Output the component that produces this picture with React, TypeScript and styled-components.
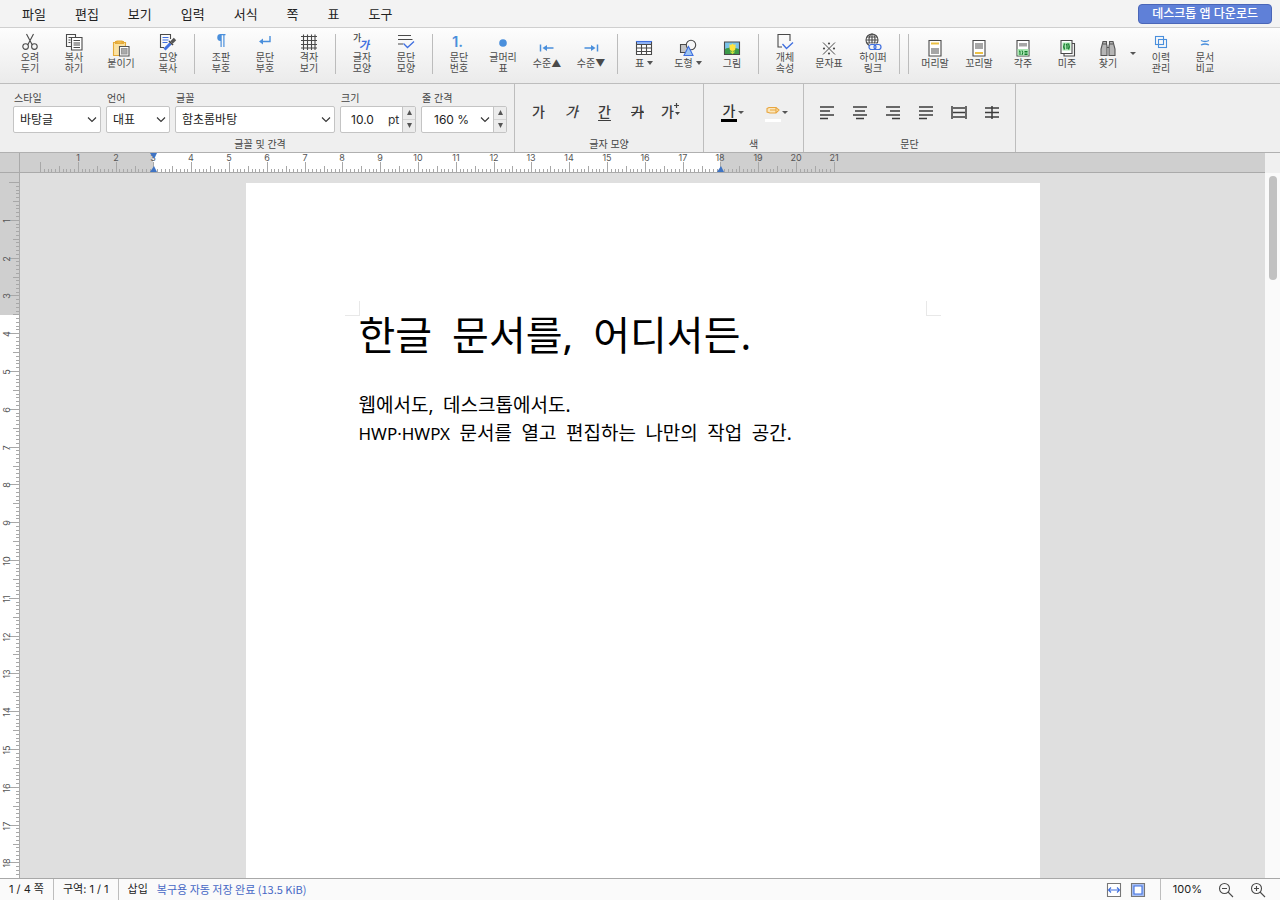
import React, { useLayoutEffect, useRef, useState } from "react";
import styled, { createGlobalStyle, css } from "styled-components";

const ui = `"Inter", "Noto Sans CJK KR", sans-serif`;

const Global = createGlobalStyle`
  * { box-sizing: border-box; }
  html, body { margin: 0; height: 100%; }
  body { font-family: ${ui}; color: #333; background: #dfdfdf; }
  button, select, input { font-family: inherit; color: inherit; margin: 0; }
  button { border: 0; background: none; padding: 0; cursor: pointer; }
  svg { display: block; }
`;

const Shell = styled.div`
  display: flex;
  flex-direction: column;
  height: 100vh;
  overflow: hidden;
`;

/* ---------- menu bar ---------- */

const MenuBar = styled.header`
  display: flex;
  align-items: center;
  justify-content: space-between;
  flex: none;
  height: 28px;
  padding: 0 8px;
  background: #f3f3f3;
  border-bottom: 1px solid #cfcfcf;
`;

const Menus = styled.nav`
  display: flex;
`;

const MenuButton = styled.button`
  padding: 0 14px;
  margin-right: 1px;
  font-size: 13px;
  line-height: 20px;
  color: #222;
`;

const DownloadLink = styled.a`
  height: 20px;
  padding: 0 13px;
  border: 1px solid #4a66b8;
  border-radius: 4px;
  background: #5f80d8;
  color: #fff;
  font-size: 12px;
  font-weight: 500;
  line-height: 18px;
  text-decoration: none;
`;

/* ---------- icon toolbar ---------- */

const Toolbar = styled.div`
  display: flex;
  align-items: center;
  flex: none;
  height: 56px;
  padding: 0 8px 4px;
  background: linear-gradient(#fdfdfd, #ebebeb);
  border-bottom: 1px solid #bdbdbd;
`;

const ToolButton = styled.button<{ $w?: number }>`
  display: flex;
  flex-direction: column;
  align-items: center;
  gap: 1px;
  flex: none;
  width: ${(p) => p.$w ?? 44}px;
`;

const ToolLabel = styled.span`
  display: flex;
  align-items: center;
  gap: 3px;
  font-size: 10px;
  line-height: 11px;
  white-space: pre-line;
  text-align: center;
  color: #4a4a4a;
`;

const Caret = styled.span`
  border: 3px solid transparent;
  border-top: 4px solid #555;
  border-bottom: 0;
`;

const SmallCaret = styled.span`
  border: 3px solid transparent;
  border-top-color: #555;
  border-bottom: 0;
`;

const CaretButton = styled.button`
  display: flex;
  justify-content: center;
  flex: none;
  width: 12px;
  padding: 8px 0;
`;

const Separator = styled.span`
  flex: none;
  width: 1px;
  height: 40px;
  margin: 0 4px;
  background: #bcbcbc;
`;

/* ---------- format bar ---------- */

const FormatBar = styled.div`
  display: flex;
  flex: none;
  height: 69px;
  background: #efefef;
  border-bottom: 1px solid #b0b0b0;
`;

const Group = styled.section<{ $pad: string }>`
  display: flex;
  flex-direction: column;
  flex: none;
  padding: ${(p) => p.$pad};
  border-right: 1px solid #bdbdbd;
`;

const GroupRow = styled.div<{ $gap?: number; $pad?: string }>`
  display: flex;
  align-items: center;
  flex: 1;
  gap: ${(p) => p.$gap ?? 0}px;
  padding: ${(p) => p.$pad ?? "0"};
`;

const GroupTitle = styled.h2`
  margin: 0;
  font-size: 10px;
  font-weight: 400;
  line-height: 16px;
  text-align: center;
  color: #444;
`;

const Field = styled.div<{ $w: number }>`
  display: flex;
  flex-direction: column;
  width: ${(p) => p.$w}px;
`;

const FieldLabel = styled.label`
  padding-left: 1px;
  font-size: 10px;
  line-height: 16px;
  color: #444;
`;

const Control = styled.div`
  display: flex;
  align-items: stretch;
  position: relative;
  height: 27px;
  border: 1px solid #c4c4c4;
  border-radius: 2px;
  background: #fff;
  overflow: hidden;
`;

const Select = styled.select<{ $pad?: number }>`
  appearance: none;
  flex: 1;
  min-width: 0;
  border: 0;
  padding: 0 20px 0 ${(p) => p.$pad ?? 6}px;
  background: transparent;
  font-size: 12px;
  color: #222;
`;

const Chevron = styled.svg<{ $right?: number }>`
  position: absolute;
  top: 9px;
  right: ${(p) => p.$right ?? 3}px;
  pointer-events: none;
`;

const SizeInput = styled.input`
  width: 44px;
  border: 0;
  padding: 0 0 0 10px;
  background: transparent;
  font-size: 12px;
  color: #222;
`;

const Unit = styled.span`
  flex: 1;
  padding-left: 3px;
  font-size: 12px;
  line-height: 25px;
`;

const Spinner = styled.div`
  display: flex;
  flex-direction: column;
  width: 13px;
  border-left: 1px solid #c4c4c4;
  background: #ececec;
`;

const SpinButton = styled.button`
  display: flex;
  align-items: center;
  justify-content: center;
  flex: 1;
  & + & {
    border-top: 1px solid #d4d4d4;
  }
`;

const FormatButton = styled.button<{ $italic?: boolean; $line?: "underline" | "line-through" }>`
  display: flex;
  align-items: center;
  justify-content: center;
  width: 33px;
  height: 26px;
  font-size: 14px;
  font-weight: 500;
  line-height: 20px;
  color: #3c3c3c;
  ${(p) => p.$italic && css`font-style: italic;`}
  ${(p) =>
    p.$line &&
    css`
      text-decoration: ${p.$line} 1px;
      text-underline-offset: 3px;
    `}
`;

const ColorButton = styled.button`
  display: flex;
  align-items: center;
  gap: 1px;
  width: 38px;
  height: 26px;
`;

const Swatch = styled.span<{ $color: string }>`
  display: flex;
  justify-content: center;
  align-items: center;
  width: 16px;
  height: 19px;
  border-bottom: 3px solid ${(p) => p.$color};
  font-size: 14px;
  font-weight: 500;
  line-height: 16px;
`;

/* ---------- work area ---------- */

const WorkArea = styled.main`
  display: grid;
  grid-template-columns: 20px 1fr 15px;
  grid-template-rows: 20px 1fr;
  flex: 1;
  min-height: 0;
`;

const Corner = styled.div`
  background: #cfcfcf;
  border-right: 1px solid #aaa;
  border-bottom: 1px solid #aaa;
`;

const TopRuler = styled.div`
  overflow: hidden;
  background: #cfcfcf;
  border-bottom: 1px solid #aaa;
`;

const SideRuler = styled.div`
  min-height: 0;
  overflow: hidden;
  background: #fff;
  border-right: 1px solid #aaa;
`;

const RulerEnd = styled.div`
  background: #f0f0f0;
`;

const Viewport = styled.div`
  display: flex;
  justify-content: center;
  min-height: 0;
  padding-top: 10px;
  overflow: hidden;
  background: #dfdfdf;
`;

const Page = styled.article`
  flex: none;
  width: 794px;
  height: 1123px;
  padding: 118px 99px 0;
  background: #fff;
`;

const CropMarks = styled.div`
  display: flex;
  justify-content: space-between;
`;

const CropMark = styled.span<{ $side: "left" | "right" }>`
  width: 15px;
  height: 15px;
  border-bottom: 1px solid #e8e8e8;
  border-${(p) => (p.$side === "left" ? "right" : "left")}: 1px solid #e8e8e8;
`;

const Body = styled.div`
  padding: 0 14px;
  font-family: "Noto Sans Mono CJK KR", "Noto Sans CJK KR", sans-serif;
  color: #000;
`;

const Title = styled.h1`
  margin: 0 0 40px;
  font-size: 40px;
  font-weight: 400;
  line-height: 34px;
`;

const Line = styled.p`
  margin: 0;
  font-size: 19px;
  line-height: 28px;
`;

const Latin = styled.span`
  font-family: "Noto Sans", sans-serif;
  line-height: 0;
`;

const LatinWord = styled(Latin)`
  font-size: 17px;
`;

const ScrollTrack = styled.div`
  padding: 3px;
  background: #fafafa;
`;

const ScrollThumb = styled.div`
  width: 8px;
  height: 104px;
  margin-left: 1px;
  border-radius: 4px;
  background: #c1c1c1;
`;

/* ---------- status bar ---------- */

const StatusBar = styled.footer`
  display: flex;
  align-items: stretch;
  flex: none;
  height: 22px;
  border-top: 1px solid #a8a8a8;
  background: #fafafa;
  font-size: 11px;
  line-height: 21px;
  color: #222;
`;

const StatusCell = styled.span<{ $divided?: boolean }>`
  padding: 0 9px;
  border-right: ${(p) => (p.$divided ? "1px solid #bdbdbd" : "0")};
`;

const SaveState = styled.span`
  flex: 1;
  font-family: "Noto Sans CJK KR", sans-serif;
  color: #4668c5;
`;

const ViewButtons = styled.div`
  display: flex;
  align-items: center;
  gap: 8px;
  padding-right: 14px;
  border-right: 1px solid #bdbdbd;
`;

const ZoomControls = styled.div`
  display: flex;
  align-items: center;
  gap: 16px;
  padding: 0 14px 0 12px;
`;

/* ---------- icons ---------- */

const Icon = ({ children, w = 18, h = 18 }: { children: React.ReactNode; w?: number; h?: number }) => (
  <svg width={w} height={h} viewBox={`0 0 ${w} ${h}`} fill="none" stroke="#4a4a4a" strokeWidth="1.1" aria-hidden="true">
    {children}
  </svg>
);

const blue = "#4a8fdc";
const royal = "#3f6fe0";

const icons: Record<string, React.ReactNode> = {
  cut: <Icon><path d="M5.500 1 11.300 12M12.500 1 6.700 12" /><circle cx="4.600" cy="13.600" r="2.800" /><circle cx="13.400" cy="13.600" r="2.800" /></Icon>,
  copy: <Icon><path d="M6 13.500H1.500v-12h9V4" /><path d="M3.500 4.500H6M3.500 7H5.500M3.500 9.500H5.500" /><path d="M6.500 4.500h10.500v12.500H6.500z" fill="#fff" /><path d="M8.500 7.500H15M8.500 10H15M8.500 12H15M8.500 14.500H15" /></Icon>,
  paste: <Icon><path d="M1.500 3.500h12v13h-12z" fill="#fbe2a2" stroke="#e5ab3a" /><path d="M3 3.500h9" stroke="#e5ab3a" strokeWidth="3" /><path d="M5 4.500V2h5v2.500z" fill="#f0bb4c" stroke="#e5ab3a" /><path d="M7.500 7.500h9.500v9.500H7.500z" fill="#fff" stroke="#555" /><path d="M9.500 9.500h5.500v5.500H9.500z" fill="#aaa" stroke="#999" /></Icon>,
  painter: <Icon><path d="M11.500 6V1.500H1.500v13H5" /><path d="M3.500 4.500h6M3.500 7h6M3.500 9.500h5" stroke={royal} /><path d="M5.500 16.500 11.500 10.500" stroke={royal} strokeWidth="3" /><path d="M10 8l4 4" stroke="#444" strokeWidth="1.600" /><path d="M12.500 9.500 16 6" stroke="#555" strokeWidth="3.400" /></Icon>,
  pilcrow: <Icon><path d="M9 1H13.500V2.200H12.500V14H11.300V2.200H9.700V14H8.500V8A3.500 3.500 0 0 1 9 1z" fill={blue} stroke="none" /></Icon>,
  enter: <Icon><path d="M14 3v5.500H5" stroke={blue} strokeWidth="1.400" /><path d="M3 8.500 7 5.500v6z" fill={blue} stroke="none" /></Icon>,
  grid: <Icon><path d="M3.500 1.500v15.500M7.500 1.500v15.500M11.500 1.500v15.500M15 1.500v15.500M1 3.500h16M1 7.500h16M1 11.500h16M1 15h16" /></Icon>,
  charShape: (
    <Icon>
      <text x="0" y="8" fontSize="9" fontWeight="500" fill="#444" stroke="none">가</text>
      <text x="6" y="16" fontSize="11" fontWeight="700" fontStyle="italic" fill={royal} stroke="none">가</text>
    </Icon>
  ),
  paraShape: <Icon><path d="M1 2.500h13M1 6.500h14.500M1 11h5" /><path d="M6.500 10.500l4 4L17 8.500" stroke={royal} strokeWidth="1.300" /></Icon>,
  number: <Icon><text x="2" y="14" fontSize="15" fontWeight="600" fill={blue} stroke="none">1.</text></Icon>,
  bullet: <Icon><circle cx="9" cy="10" r="3.800" fill={blue} stroke="none" /></Icon>,
  levelUp: <Icon><path d="M2.500 5.500v7M15.500 9H7" stroke={blue} strokeWidth="1.500" /><path d="M4.500 9 9 6v6z" fill={blue} stroke="none" /></Icon>,
  levelDown: <Icon><path d="M15.500 5.500v7M2.500 9H11" stroke={blue} strokeWidth="1.500" /><path d="M13.500 9 9 6v6z" fill={blue} stroke="none" /></Icon>,
  table: <Icon><path d="M1.500 2.500h15v13h-15z" fill="#fff" /><path d="M2 3h14v2.500H2z" fill="#8fb4f6" stroke="none" /><path d="M1 2.500h16" stroke={royal} /><path d="M1.500 5.500h15M1.500 9h15M1.500 12.500h15M6.500 5v10.500M11.500 5v10.500" /></Icon>,
  shape: <Icon><path d="M1.500 5.500h8.500v8H1.500z" fill="#c4c4c4" /><circle cx="12" cy="6" r="4.700" fill="#f6f6f6" /><path d="M9.500 7.500 14 16.500H5z" fill="#9cc4f2" stroke={royal} /></Icon>,
  image: <Icon><path d="M1.500 3h15v12.500h-15z" fill="#7ac4ea" stroke="#4a4a4a" /><path d="M2 10c4-2 9-2 14 0v5H2z" fill="#3c9a49" stroke="none" /><path d="M6.500 5 8 6l1.500-1.500L11 6l1.500-1v4a3 3 0 0 1-6 0z" fill="#ffe440" stroke="none" /><path d="M9.500 11.500v3.500M7.500 12.500l2 2 2-2" stroke="#c8df3c" /></Icon>,
  object: <Icon><path d="M14 8V1.500H2v12.500h4" /><path d="M6.500 11l4 4.500L17 9.500" stroke={royal} strokeWidth="1.300" /></Icon>,
  symbol: <Icon><path d="M3 3.500l12 12M15 3.500l-12 12" strokeWidth="1" /><g fill="#4a4a4a" stroke="none"><circle cx="9" cy="4.500" r="1.100" /><circle cx="9" cy="14.500" r="1.100" /><circle cx="4" cy="9.500" r="1.100" /><circle cx="14" cy="9.500" r="1.100" /></g></Icon>,
  link: <Icon><circle cx="8" cy="7" r="6" /><path d="M8 1v12M2 7h12M3 4h10M3 10h10" /><ellipse cx="8" cy="7" rx="3" ry="6" /><path d="M5 10.500h13v6.500H5z" fill="#f4f4f4" stroke="none" /><rect x="5" y="11.500" width="7" height="5" rx="2.500" stroke={royal} strokeWidth="1.200" /><rect x="10" y="11.500" width="7" height="5" rx="2.500" stroke={royal} strokeWidth="1.200" /></Icon>,
  header: <Icon><path d="M3 1.500h12v15.500H3z" fill="#fff" /><path d="M5 4.500h8" stroke="#ecc044" strokeWidth="2" /><path d="M5 9h8v6H5z" fill="#a6a6a6" stroke="none" /></Icon>,
  footer: <Icon><path d="M3 1.500h12v15.500H3z" fill="#fff" /><path d="M5 4h8v6H5z" fill="#a6a6a6" stroke="none" /><path d="M5 14h8" stroke="#ecc044" strokeWidth="2" /></Icon>,
  footnote: <Icon><path d="M3 1.500h12v15.500H3z" fill="#fff" /><path d="M5 4h8v3.500H5z" fill="#a6a6a6" stroke="none" /><path d="M3.500 10h11v6.500h-11z" fill="#a9e6b1" stroke="none" /><path d="M5 12.500l1-.7V16M8 11.500q1.500 2.200 0 4.500M10.500 12.500h3M10.500 14h3M10.500 15.500h3" stroke="#137a2b" strokeWidth="1" /></Icon>,
  endnote: <Icon><path d="M14 4.500h2.500v12.500H6v-2.500" /><path d="M3 1.500h11v13H3z" fill="#fff" /><path d="M4.500 3.500h8v8h-8z" fill="#a9e6b1" stroke="none" /><path d="M6.500 4.500q-1.500 3 0 6M10.500 4.500q1.500 3 0 6M8 6l1-.8V10" stroke="#137a2b" strokeWidth="1.200" /></Icon>,
  find: <Icon><path d="M4 2.500h3.500V5l.5 2v9.500H2V10zM14 2.500h-3.500V5L10 7v9.500h6V10z" fill="#b5b5b5" stroke="#555" /><path d="M4 5h3.500M10.500 5H14M8 8.500h2" stroke="#555" /></Icon>,
  history: <Icon><rect x="3.500" y="3.500" width="8" height="8" stroke={blue} /><rect x="6.500" y="6.500" width="8" height="8" stroke={blue} /></Icon>,
  compare: <Icon><path d="M5 7.500c3 1.500 5 1.500 8 0M5 12c3-1.500 5-1.500 8 0" stroke={blue} strokeWidth="1.300" /></Icon>,
};

const alignLines: Record<string, string> = {
  left: "M1 2h14M1 6h10M1 10h14M1 13.500h8",
  center: "M1 2h14M3 6h10M1 10h14M4 13.500h8",
  right: "M1 2h14M5 6h10M1 10h14M7 13.500h8",
  justify: "M1 2h14M1 6h14M1 10h14M1 13.500h8",
  distribute: "M1 1v13M15 1v13M2 3h12M2 7.500h12M2 12h12",
  divide: "M1 3h14M1 7.500h14M1 12h14M8 1v13",
};

const alignNames: Record<string, string> = {
  left: "왼쪽 정렬",
  center: "가운데 정렬",
  right: "오른쪽 정렬",
  justify: "양쪽 정렬",
  distribute: "배분 정렬",
  divide: "나눔 정렬",
};

const ChevronDown = ({ right }: { right?: number }) => (
  <Chevron $right={right} width="10" height="7" viewBox="0 0 10 7" fill="none" stroke="#333" strokeWidth="1.1" aria-hidden="true">
    <path d="M1 1.500 5 5.500 9 1.500" />
  </Chevron>
);

const SpinArrows = ({ name }: { name: string }) => (
  <Spinner>
    <SpinButton aria-label={`${name} 늘리기`}>
      <svg width="5" height="5" viewBox="0 0 5 5" fill="#555"><path d="M2.500 0 5 5H0z" /></svg>
    </SpinButton>
    <SpinButton aria-label={`${name} 줄이기`}>
      <svg width="5" height="5" viewBox="0 0 5 5" fill="#555"><path d="M2.500 5 0 0h5z" /></svg>
    </SpinButton>
  </Spinner>
);

/* ---------- rulers ---------- */

const CM = 37.8;
const PAGE_CM = 29;
const tickLength = (mm: number) => (mm % 10 === 0 ? 10 : mm % 5 === 0 ? 6 : 3);
const range = (n: number) => Array.from({ length: n }, (_, i) => i);

const HorizontalRuler = () => {
  const at = (cm: number) => Math.round(20 + cm * CM);
  return (
    <svg width="100%" height="19" fontSize="9" fill="#555" textAnchor="middle" aria-hidden="true">
      <rect x={at(3)} width={at(18) - at(3)} height="19" fill="#fff" />
      {range(211).map((mm) => (
        <rect key={mm} x={at(mm / 10)} y={19 - tickLength(mm)} width="1" height={tickLength(mm)} fill="#a8a8a8" />
      ))}
      {range(21).map((i) => (
        <text key={i} x={at(i + 1)} y="8">{i + 1}</text>
      ))}
      <path d={`M${at(3) - 3} 0h7l-3 6z`} fill="#3f74c4" />
      <path d={`M${at(3) - 3} 19h7l-3 -6z`} fill="#3f74c4" />
      <path d={`M${at(18) - 3} 19h7l-3 -6z`} fill="#3f74c4" />
    </svg>
  );
};

const VerticalRuler = () => {
  const frame = useRef<HTMLDivElement>(null);
  const [height, setHeight] = useState(0);

  useLayoutEffect(() => {
    const el = frame.current;
    if (!el) return;
    const measure = () => setHeight(el.clientHeight);
    measure();
    const observer = new ResizeObserver(measure);
    observer.observe(el);
    return () => observer.disconnect();
  }, []);

  const at = (cm: number) => Math.round(10 + cm * CM);
  const visibleCm = Math.max(0, Math.min(PAGE_CM, Math.floor((height - 16) / CM)));
  const visibleMm = Math.max(0, Math.min(PAGE_CM * 10, Math.floor(((height - 10) / CM) * 10)));
  return (
    <SideRuler ref={frame}>
      <svg width="19" height={height} fontSize="9" fill="#555" textAnchor="middle" aria-hidden="true">
        <rect width="19" height={at(3.5)} fill="#cfcfcf" />
        {range(visibleMm + 1).map((mm) => (
          <rect key={mm} x={19 - tickLength(mm)} y={at(mm / 10) - 1} width={tickLength(mm)} height="1" fill="#a8a8a8" />
        ))}
        {range(visibleCm).map((i) => (
          <text key={i} transform={`translate(10 ${at(i + 1)}) rotate(-90)`}>{i + 1}</text>
        ))}
      </svg>
    </SideRuler>
  );
};

/* ---------- data ---------- */

type Tool = { icon: string; label: string; w?: number; caret?: boolean };

const toolGroups: Tool[][] = [
  [
    { icon: "cut", label: "오려\n두기" },
    { icon: "copy", label: "복사\n하기" },
    { icon: "paste", label: "붙이기", w: 50 },
    { icon: "painter", label: "모양\n복사" },
  ],
  [
    { icon: "pilcrow", label: "조판\n부호" },
    { icon: "enter", label: "문단\n부호" },
    { icon: "grid", label: "격자\n보기" },
  ],
  [
    { icon: "charShape", label: "글자\n모양" },
    { icon: "paraShape", label: "문단\n모양" },
  ],
  [
    { icon: "number", label: "문단\n번호" },
    { icon: "bullet", label: "글머리\n표" },
    { icon: "levelUp", label: "수준▲" },
    { icon: "levelDown", label: "수준▼" },
  ],
  [
    { icon: "table", label: "표", caret: true },
    { icon: "shape", label: "도형", caret: true },
    { icon: "image", label: "그림" },
  ],
  [
    { icon: "object", label: "개체\n속성" },
    { icon: "symbol", label: "문자표" },
    { icon: "link", label: "하이퍼\n링크" },
  ],
  [],
  [
    { icon: "header", label: "머리말" },
    { icon: "footer", label: "꼬리말" },
    { icon: "footnote", label: "각주" },
    { icon: "endnote", label: "미주" },
    { icon: "find", label: "찾기", w: 38 },
  ],
];

const ToolItem = ({ icon, label, w, caret }: Tool) => (
  <ToolButton $w={w}>
    {icons[icon]}
    <ToolLabel>
      {label}
      {caret && <Caret />}
    </ToolLabel>
  </ToolButton>
);

const SelectField = ({ id, label, value, width }: { id: string; label: string; value: string; width: number }) => (
  <Field $w={width}>
    <FieldLabel htmlFor={id}>{label}</FieldLabel>
    <Control>
      <Select id={id}><option>{value}</option></Select>
      <ChevronDown />
    </Control>
  </Field>
);

export default function App() {
  return (
    <Shell>
      <Global />
      <MenuBar>
        <Menus>
          {["파일", "편집", "보기", "입력", "서식", "쪽", "표", "도구"].map((m) => (
            <MenuButton key={m}>{m}</MenuButton>
          ))}
        </Menus>
        <DownloadLink href="#download">데스크톱 앱 다운로드</DownloadLink>
      </MenuBar>

      <Toolbar>
        {toolGroups.map((group, i) => (
          <React.Fragment key={i}>
            {i > 0 && <Separator />}
            {group.map((tool) => <ToolItem key={tool.label} {...tool} />)}
          </React.Fragment>
        ))}
        <CaretButton aria-label="찾기 메뉴"><SmallCaret /></CaretButton>
        <ToolItem icon="history" label={"이력\n관리"} />
        <ToolItem icon="compare" label={"문서\n비교"} />
      </Toolbar>

      <FormatBar>
        <Group $pad="2px 7px 0 13px">
          <GroupRow $gap={5}>
            <SelectField id="style" label="스타일" value="바탕글" width={88} />
            <SelectField id="lang" label="언어" value="대표" width={64} />
            <SelectField id="font" label="글꼴" value="함초롬바탕" width={160} />
            <Field $w={76}>
              <FieldLabel htmlFor="size">크기</FieldLabel>
              <Control>
                <SizeInput id="size" defaultValue="10.0" />
                <Unit>pt</Unit>
                <SpinArrows name="크기" />
              </Control>
            </Field>
            <Field $w={86}>
              <FieldLabel htmlFor="leading">줄 간격</FieldLabel>
              <Control>
                <Select id="leading" $pad={12}><option>160 %</option></Select>
                <ChevronDown right={16} />
                <SpinArrows name="줄 간격" />
              </Control>
            </Field>
          </GroupRow>
          <GroupTitle>글꼴 및 간격</GroupTitle>
        </Group>

        <Group $pad="4px 0 0">
          <GroupRow $pad="0 16px 0 7px">
            <FormatButton aria-label="진하게">가</FormatButton>
            <FormatButton aria-label="기울임" $italic>가</FormatButton>
            <FormatButton aria-label="밑줄" $line="underline">간</FormatButton>
            <FormatButton aria-label="취소선" $line="line-through">가</FormatButton>
            <FormatButton aria-label="글자 효과">
              가
              <svg width="6" height="18" viewBox="0 0 6 18" fill="none" stroke="#444" strokeWidth="1.2">
                <path d="M2.500 0v5M0 2.500h5" />
                <path d="M1 9h5L3.500 12z" fill="#444" stroke="none" />
              </svg>
            </FormatButton>
          </GroupRow>
          <GroupTitle>글자 모양</GroupTitle>
        </Group>

        <Group $pad="4px 0 0">
          <GroupRow $gap={6} $pad="0 0 0 17px">
            <ColorButton aria-label="글자 색"><Swatch $color="#000">가</Swatch><SmallCaret /></ColorButton>
            <ColorButton aria-label="형광펜">
              <Swatch $color="#fff">
                <svg width="14" height="10" viewBox="0 0 14 10" fill="#fbe6bb" stroke="#e8a640" strokeWidth="1.1">
                  <path d="M1 2.500 3 1.500h7l3 2.500-3 3H4L1 6z" /><path d="M4 4h6M10 1.500v5.500" />
                </svg>
              </Swatch>
              <SmallCaret />
            </ColorButton>
          </GroupRow>
          <GroupTitle>색</GroupTitle>
        </Group>

        <Group $pad="4px 0 0">
          <GroupRow $pad="0 7px 0 6px">
            {Object.entries(alignLines).map(([name, d]) => (
              <FormatButton key={name} aria-label={alignNames[name]}>
                <svg width="16" height="15" viewBox="0 0 16 15" fill="none" stroke="#3c3c3c" strokeWidth="1.5"><path d={d} /></svg>
              </FormatButton>
            ))}
          </GroupRow>
          <GroupTitle>문단</GroupTitle>
        </Group>
      </FormatBar>

      <WorkArea>
        <Corner />
        <TopRuler><HorizontalRuler /></TopRuler>
        <RulerEnd />
        <VerticalRuler />
        <Viewport>
          <Page>
            <CropMarks><CropMark $side="left" /><CropMark $side="right" /></CropMarks>
            <Body>
              <Title>한글 문서를<Latin>,</Latin> 어디서든<Latin>.</Latin></Title>
              <Line>웹에서도<Latin>,</Latin> 데스크톱에서도<Latin>.</Latin></Line>
              <Line><LatinWord>HWP·HWPX</LatinWord> 문서를 열고 편집하는 나만의 작업 공간<Latin>.</Latin></Line>
            </Body>
          </Page>
        </Viewport>
        <ScrollTrack><ScrollThumb /></ScrollTrack>
      </WorkArea>

      <StatusBar>
        <StatusCell $divided>1 / 4 쪽</StatusCell>
        <StatusCell $divided>구역: 1 / 1</StatusCell>
        <StatusCell>삽입</StatusCell>
        <SaveState>복구용 자동 저장 완료 (13.5 KiB)</SaveState>
        <ViewButtons>
          <button aria-label="폭 맞춤">
            <Icon w={16} h={16}><path d="M1.500 1.500h13v13h-13z" fill="#fff" stroke="#777" /><path d="M2.500 8h11M5 5.500 2.500 8 5 10.500M11 5.500 13.500 8 11 10.500" stroke={royal} /></Icon>
          </button>
          <button aria-label="쪽 맞춤">
            <Icon w={16} h={16}><path d="M1.500 1.500h13v13h-13z" fill="#a9c0f3" stroke="#777" /><path d="M4 4h8v8H4z" fill="#fff" stroke={royal} /></Icon>
          </button>
        </ViewButtons>
        <ZoomControls>
          <span>100%</span>
          <button aria-label="축소">
            <Icon w={16} h={16}><circle cx="6.500" cy="6.500" r="5" /><path d="M10 10l5 5M4 6.500h5" /></Icon>
          </button>
          <button aria-label="확대">
            <Icon w={16} h={16}><circle cx="6.500" cy="6.500" r="5" /><path d="M10 10l5 5M4 6.500h5M6.500 4v5" /></Icon>
          </button>
        </ZoomControls>
      </StatusBar>
    </Shell>
  );
}
